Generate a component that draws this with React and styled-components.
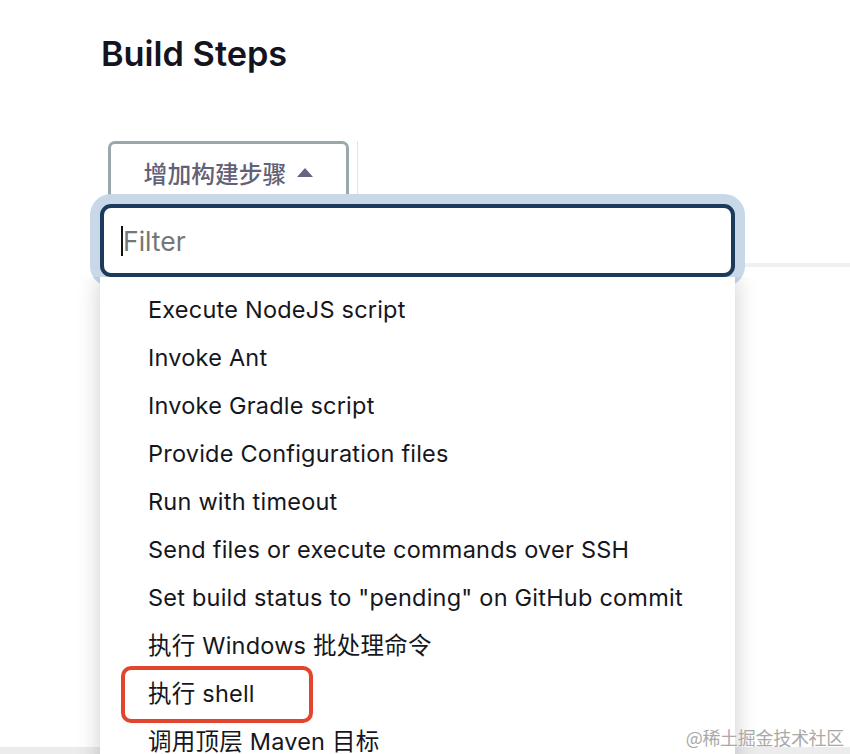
import React from "react";
import styled, { createGlobalStyle } from "styled-components";

const Global = createGlobalStyle`
  html, body { margin: 0; padding: 0; background: #ffffff; }
  body { font-family: Inter, "Noto Sans CJK SC", sans-serif; }
  #root { width: 850px; height: 754px; }
`;

const Page = styled.div`
  position: relative;
  width: 850px;
  height: 754px;
  overflow: hidden;
  display: flex;
  flex-direction: column;
  background: #fff;
`;

const Title = styled.h2`
  margin: 33px 0 0 101px;
  font-family: Inter, sans-serif;
  font-size: 34.3px;
  line-height: 41px;
  font-weight: 600;
  color: #14141f;
`;

const ButtonRow = styled.div`
  display: flex;
  align-items: stretch;
  margin: 67px 0 0 108px;
  height: 62px;
`;

const AddButton = styled.button`
  box-sizing: border-box;
  width: 241px;
  height: 62px;
  border: 3px solid #9aa8ab;
  border-radius: 7px;
  background: #fff;
  display: flex;
  align-items: center;
  justify-content: center;
  gap: 11px;
  padding: 0;
  font-family: "Noto Sans CJK SC", sans-serif;
  font-size: 23.8px;
  font-weight: 500;
  color: #626177;
  cursor: pointer;
`;

const Caret = styled.svg`
  width: 16px;
  height: 9px;
  margin-top: 1px;
`;

const Divider = styled.div`
  width: 1px;
  margin-left: 8px;
  background: #e3e3e3;
`;

const Section = styled.div`
  flex: 1;
  margin: 60px 0 0 100px;
  border-top: 4px solid #f0f0f0;
`;

const FooterBand = styled.div`
  height: 7px;
  background: #ececec;
`;

const Dropdown = styled.div`
  position: absolute;
  left: 100px;
  top: 204px;
  width: 635px;
  display: flex;
  flex-direction: column;
`;

const FilterBox = styled.div`
  box-sizing: border-box;
  height: 73px;
  border: 4px solid #1c3b5c;
  border-radius: 11px;
  box-shadow: 0 0 0 10px #c8d8e8;
  display: flex;
  align-items: center;
  padding-left: 17px;
  background: #fff;
`;

const CaretLine = styled.span`
  display: inline-block;
  width: 2px;
  height: 30px;
  background: #111;
  margin-right: 0px;
`;

const Placeholder = styled.span`
  font-family: Inter, sans-serif;
  font-size: 26.5px;
  color: #767676;
`;

const List = styled.ul`
  position: relative;
  z-index: 1;
  list-style: none;
  margin: 0;
  padding: 9px 0 0 0;
  height: 520px;
  background: #fff;
  box-shadow: 0 0 22px rgba(0, 0, 0, 0.2);
  clip-path: inset(0 -40px -40px -40px);
`;

const Item = styled.li`
  height: 48px;
  line-height: 48px;
  padding-left: 48px;
  font-family: Inter, "Noto Sans CJK SC", sans-serif;
  font-size: 23.5px;
  letter-spacing: 0.22px;
  color: #16161d;
  white-space: nowrap;
`;

const Highlight = styled.div`
  position: absolute;
  left: 121px;
  top: 666px;
  width: 192px;
  height: 57px;
  box-sizing: border-box;
  border: 4px solid #e2452d;
  border-radius: 10px;
  z-index: 2;
`;

const Watermark = styled.div`
  position: absolute;
  right: 6px;
  bottom: 4px;
  font-family: "Noto Sans CJK SC", sans-serif;
  font-size: 18px;
  color: #a9a9a9;
  z-index: 3;
  letter-spacing: -0.3px;
`;

const items = [
  "Execute NodeJS script",
  "Invoke Ant",
  "Invoke Gradle script",
  "Provide Configuration files",
  "Run with timeout",
  "Send files or execute commands over SSH",
  'Set build status to "pending" on GitHub commit',
  "执行 Windows 批处理命令",
  "执行 shell",
  "调用顶层 Maven 目标",
];

export default function App() {
  return (
    <>
      <Global />
      <Page>
        <Title>Build Steps</Title>
        <ButtonRow>
          <AddButton>
            增加构建步骤
            <Caret viewBox="0 0 16 9">
              <path d="M0 9 L8 0 L16 9 Z" fill="#66657e" />
            </Caret>
          </AddButton>
          <Divider />
        </ButtonRow>
        <Section />
        <FooterBand />
        <Dropdown>
          <FilterBox>
            <CaretLine />
            <Placeholder>Filter</Placeholder>
          </FilterBox>
          <List>
            {items.map((t) => (
              <Item key={t}>{t}</Item>
            ))}
          </List>
        </Dropdown>
        <Highlight />
        <Watermark>@稀土掘金技术社区</Watermark>
      </Page>
    </>
  );
}
